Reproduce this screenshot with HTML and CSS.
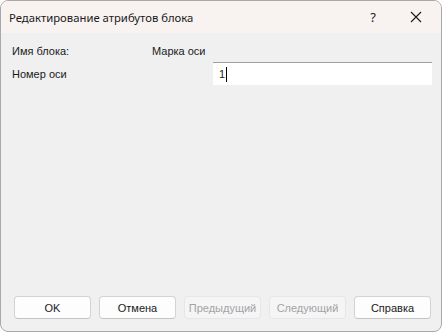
FILE: index.html
```html
<!DOCTYPE html>
<html lang="ru">
<head>
  <meta charset="UTF-8">
  <title>Редактирование атрибутов блока</title>
  <link rel="stylesheet" href="styles.css">
</head>
<body>
  <div class="window">
    <div class="titlebar">
      <span class="title">Редактирование атрибутов блока</span>
      <span class="help">?</span>
      <span class="close">
        <svg width="12" height="12" viewBox="0 0 12 12"><path d="M1 1L11 11M11 1L1 11" stroke="#1a1a1a" stroke-width="1.1" fill="none"/></svg>
      </span>
    </div>

    <div class="content">
      <div class="row">
        <span class="label">Имя блока:</span>
        <span class="value">Марка оси</span>
      </div>
      <div class="row row-input">
        <span class="label">Номер оси</span>
        <div class="edit"><span>1</span><i class="caret"></i></div>
      </div>
    </div>

    <div class="buttons">
      <button class="btn">OK</button>
      <button class="btn">Отмена</button>
      <button class="btn" disabled>Предыдущий</button>
      <button class="btn" disabled>Следующий</button>
      <button class="btn">Справка</button>
    </div>
  </div>
</body>
</html>
```

FILE: styles.css
```css
body {
  margin: 0;
  background: #ffffff;
  font-family: "Liberation Sans", Arial, sans-serif;
  font-size: 11px;
  color: #1a1a1a;
}
.window {
  width: 440px;
  height: 330px;
  border: 1px solid #a9a9a9;
  border-radius: 8px;
  background: #f0f0f0;
  display: flex;
  flex-direction: column;
  overflow: hidden;
}
.titlebar {
  height: 32px;
  background: #f8f2f1;
  display: flex;
  align-items: center;
  padding-left: 8px;
}
.title {
  flex: 1;
  font-family: "Noto Sans", sans-serif;
  font-size: 11.3px;
}
.help {
  width: 24px;
  text-align: center;
  font-family: "Noto Sans", sans-serif;
  font-size: 13px;
  margin-right: 8px;
}
.close {
  width: 46px;
  display: flex;
  justify-content: center;
  margin-right: 2px;
}
.content {
  flex: 1;
  padding: 8px 9px 0 11px;
}
.row {
  display: flex;
  align-items: center;
  height: 20px;
}
.row-input {
  height: 23px;
  margin-top: 1px;
}
.label {
  width: 140px;
}
.row-input .label {
  width: 201px;
}
.edit {
  flex: 1;
  height: 22px;
  background: #ffffff;
  border-top: 1px solid #a0a0a0;
  display: flex;
  align-items: center;
  padding-left: 6px;
}
.caret {
  display: inline-block;
  width: 1px;
  height: 15px;
  background: #000;
  margin-left: 1px;
}
.buttons {
  display: flex;
  gap: 8px;
  padding: 0 0 12px 13px;
}
.btn {
  width: 77px;
  height: 23px;
  padding: 0;
  background: #fdfdfd;
  border: 1px solid #d3d3d3;
  border-bottom-color: #c4c4c4;
  border-radius: 4px;
  font-family: "Liberation Sans", Arial, sans-serif;
  font-size: 11px;
  color: #1a1a1a;
}
.btn:disabled {
  background: #f5f5f5;
  border-color: #e6e6e6;
  color: #a3a3a8;
}
```
